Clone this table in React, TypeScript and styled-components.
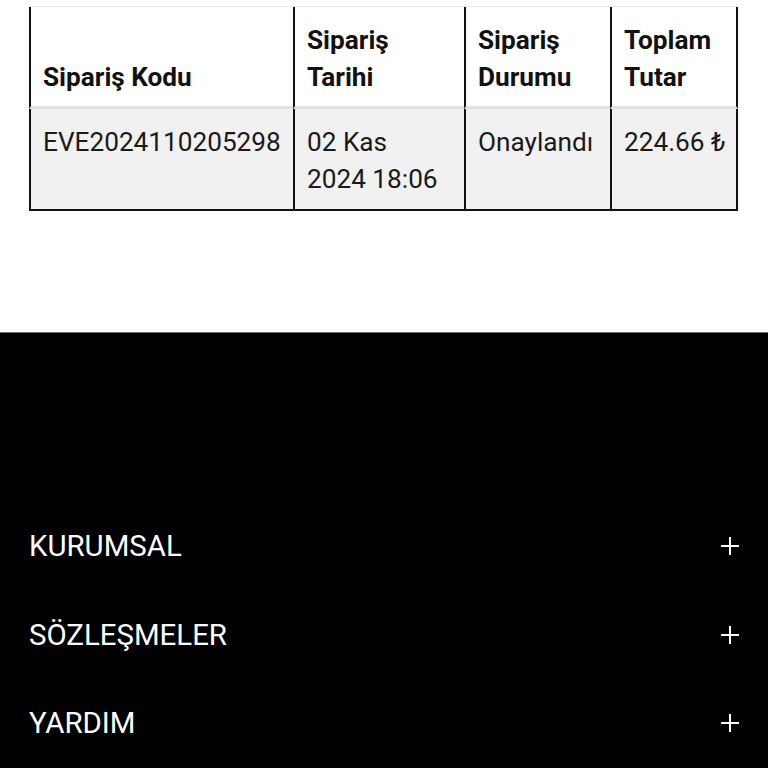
import React from "react";
import styled, { createGlobalStyle } from "styled-components";

const GlobalStyle = createGlobalStyle`
  html, body {
    margin: 0;
    padding: 0;
    background: #ffffff;
    font-family: Roboto, "Liberation Sans", Arial, sans-serif;
  }
  * { box-sizing: border-box; }
`;

const Page = styled.div`
  display: flex;
  flex-direction: column;
  min-height: 768px;
`;

const Main = styled.main`
  padding: 6px 29px 0 30px;
  height: 332px;
`;

const Table = styled.table`
  border-collapse: separate;
  border-spacing: 0;
  table-layout: fixed;
  width: 709px;
  margin-left: -1px;
  border-top: 1px solid #e6e6e6;
  color: #111111;
  font-size: 26.2px;
  line-height: 37px;
`;

const Th = styled.th<{ $last?: boolean }>`
  text-align: left;
  font-weight: 700;
  vertical-align: bottom;
  background: #ffffff;
  padding: 15px 10px 10px 12px;
  border-left: 2px solid #111111;
  border-right: ${(p) => (p.$last ? "2px solid #111111" : "none")};
  border-bottom: 3px solid #e2e2e2;
`;

const Td = styled.td<{ $last?: boolean }>`
  text-align: left;
  font-weight: 400;
  vertical-align: top;
  background: #f1f1f1;
  color: #1a1a1a;
  padding: 15px 22px 11px 12px;
  border-left: 2px solid #111111;
  border-right: ${(p) => (p.$last ? "2px solid #111111" : "none")};
  border-bottom: 2px solid #111111;
  white-space: ${(p) => (p.$last ? "nowrap" : "normal")};
`;

const Footer = styled.footer`
  flex: 1;
  background: #000000;
  border-top: 1px solid #6a6a6a;
  padding: 169px 29px 18px 29px;
  display: flex;
  flex-direction: column;
`;

const AccordionRow = styled.div`
  height: 88.5px;
  display: flex;
  align-items: center;
  justify-content: space-between;
  color: #ffffff;
  font-size: 29.4px;
  font-weight: 400;
`;

const PlusIcon = () => (
  <svg width="18" height="18" viewBox="0 0 18 18" aria-hidden="true">
    <rect x="8" y="0" width="2" height="18" fill="#ffffff" />
    <rect x="0" y="8" width="18" height="2" fill="#ffffff" />
  </svg>
);

export default function App() {
  const items = ["KURUMSAL", "SÖZLEŞMELER", "YARDIM"];
  return (
    <Page>
      <GlobalStyle />
      <Main>
        <Table>
          <colgroup>
            <col style={{ width: 264 }} />
            <col style={{ width: 171 }} />
            <col style={{ width: 146 }} />
            <col style={{ width: 128 }} />
          </colgroup>
          <thead>
            <tr>
              <Th>Sipariş Kodu</Th>
              <Th>Sipariş Tarihi</Th>
              <Th>Sipariş Durumu</Th>
              <Th $last>Toplam Tutar</Th>
            </tr>
          </thead>
          <tbody>
            <tr>
              <Td>EVE2024110205298</Td>
              <Td>02 Kas 2024 18:06</Td>
              <Td>Onaylandı</Td>
              <Td $last>224.66 ₺</Td>
            </tr>
          </tbody>
        </Table>
      </Main>
      <Footer>
        {items.map((t) => (
          <AccordionRow key={t}>
            <span>{t}</span>
            <PlusIcon />
          </AccordionRow>
        ))}
      </Footer>
    </Page>
  );
}
